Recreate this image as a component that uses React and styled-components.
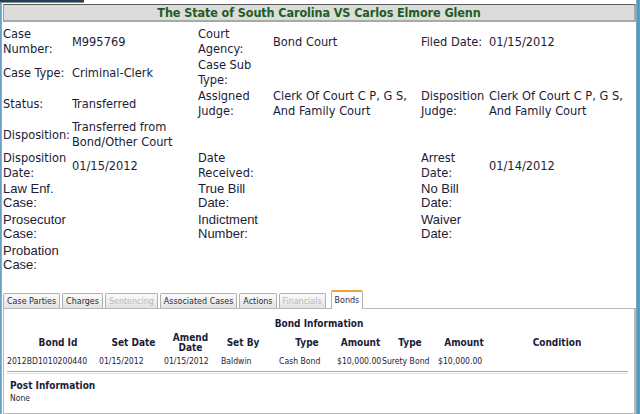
import React from "react";
import styled, { createGlobalStyle } from "styled-components";

const Global = createGlobalStyle`
  html, body {
    margin: 0;
    padding: 0;
    background: #ffffff;
  }
  body {
    font-family: "DejaVu Sans Condensed", "DejaVu Sans", "Liberation Sans", sans-serif;
    color: #1c1c38;
  }
`;

// page frame with the two blue window edges
const Frame = styled.div`
  display: flex;
  width: 640px;
  height: 414px;
  overflow: hidden;
`;

const SideStrip = styled.div`
  flex: 0 0 ${(p) => (p.$right ? 4 : 2)}px;
  background: ${(p) =>
    p.$right
      ? "linear-gradient(90deg, #7fb3cf, #4f8fb2 50%, #6aa3c3)"
      : "linear-gradient(90deg, #5d97b8, #8fbdd5)"};
`;

const Main = styled.div`
  flex: 1;
  display: flex;
  flex-direction: column;
  padding-left: 1px;
  min-width: 0;
`;

const TopNub = styled.div`
  width: 84px;
  height: 2px;
  margin-left: -3px;
  background: #1f3f5f;
  border-bottom: 1px solid #8a8a8a;
`;

const TitleBar = styled.div`
  margin-top: 1px;
  height: 15px;
  border-top: 1px solid #5a5a5a;
  border-left: 1px solid #9a9a9a;
  border-bottom: 2px solid #a8a8a8;
  border-right: 2px solid #a8a8a8;
  background: #dcdcdc;
  color: #1d5e22;
  font-weight: bold;
  font-size: 12.5px;
  line-height: 15px;
  text-align: center;
  letter-spacing: -0.1px;
`;

const Details = styled.div`
  display: grid;
  grid-template-columns: 69px 126px 75px 148px 68px 1fr;
  grid-auto-rows: 31px;
  align-items: center;
  margin-top: 4px;
  font-size: 12.7px;
  line-height: 15px;
`;

const Label = styled.div`
  white-space: nowrap;
  font-family: ${(p) =>
    p.$plain
      ? '"Liberation Sans", Arial, sans-serif'
      : '"DejaVu Sans Condensed", "DejaVu Sans", sans-serif'};
  font-size: ${(p) => (p.$plain ? "13px" : "inherit")};
  line-height: ${(p) => (p.$plain ? "14px" : "15px")};
`;

const Value = styled.div`
  white-space: nowrap;
`;

const TabRow = styled.div`
  display: flex;
  align-items: flex-end;
  gap: 2px;
  margin-top: 16px;
  height: 18px;
  position: relative;
  z-index: 1;
`;

const Tab = styled.div`
  height: ${(p) => (p.$active ? 17 : 14)}px;
  line-height: ${(p) => (p.$active ? 16 : 14)}px;
  padding: 0 3px;
  border: 1px solid #b0b0b0;
  border-bottom: none;
  border-top: ${(p) => (p.$active ? "2px solid #f2a23a" : "1px solid #b0b0b0")};
  border-radius: 2px 2px 0 0;
  background: ${(p) =>
    p.$active ? "#ffffff" : "linear-gradient(#fbfbfb, #e3e3e3)"};
  color: ${(p) => (p.$disabled ? "#b9b9b9" : "#2a2a40")};
  font-size: 8.9px;
  margin-left: ${(p) => (p.$gapBefore ? 3 : 0)}px;
  margin-bottom: ${(p) => (p.$active ? -1 : 0)}px;
  white-space: nowrap;
`;

const Panel = styled.div`
  border: 1px solid #b8b8b8;
  border-right-width: 2px;
  height: 103px;
  padding: 8px 3px 0 3px;
  font-size: 9px;
`;

const SectionTitle = styled.div`
  font-weight: bold;
  font-size: 10px;
  line-height: 13px;
  text-align: ${(p) => (p.$center ? "center" : "left")};
`;

const BondTable = styled.table`
  border-collapse: collapse;
  table-layout: fixed;
  width: 625px;
  margin-top: 3px;

  th {
    padding: 0;
    height: 21px;
  }
  td {
    font-size: 8.6px;
    line-height: 12px;
    padding: 1px 0 0 0;
    white-space: nowrap;
    text-align: left;
  }
`;

// header text centred over its column, nudged by $shift
const HeadCell = styled.div`
  display: flex;
  justify-content: center;
  text-align: center;
  white-space: nowrap;
  font-size: 10px;
  line-height: 10px;
  font-weight: bold;
  padding-left: ${(p) => Math.max(p.$shift, 0) * 2}px;
  padding-right: ${(p) => Math.max(-p.$shift, 0) * 2}px;
`;

const Rule = styled.div`
  margin: 4px 3px 0 0;
  height: 1px;
  border-top: 1px solid #a8a8a8;
  border-bottom: 1px solid #dedede;
`;

const PostBlock = styled.div`
  padding: 5px 0 0 3px;
`;

const Small = styled.div`
  font-size: 8.5px;
  line-height: 12px;
`;

const rows = [
  [
    ["Case\nNumber:", "M995769"],
    ["Court\nAgency:", "Bond Court"],
    ["Filed Date:", "01/15/2012"],
  ],
  [
    ["Case Type:", "Criminal-Clerk"],
    ["Case Sub\nType:", ""],
    ["", ""],
  ],
  [
    ["Status:", "Transferred"],
    ["Assigned\nJudge:", "Clerk Of Court C P, G S,\nAnd Family Court"],
    ["Disposition\nJudge:", "Clerk Of Court C P, G S,\nAnd Family Court"],
  ],
  [
    ["Disposition:", "Transferred from\nBond/Other Court"],
    ["", ""],
    ["", ""],
  ],
  [
    ["Disposition\nDate:", "01/15/2012"],
    ["Date\nReceived:", ""],
    ["Arrest\nDate:", "01/14/2012"],
  ],
  [
    ["Law Enf.\nCase:", "", true],
    ["True Bill\nDate:", "", true],
    ["No Bill\nDate:", "", true],
  ],
  [
    ["Prosecutor\nCase:", "", true],
    ["Indictment\nNumber:", "", true],
    ["Waiver\nDate:", "", true],
  ],
  [
    ["Probation\nCase:", "", true],
    ["", ""],
    ["", ""],
  ],
];

const lines = (text) =>
  text.split("\n").map((t, i) => (
    <React.Fragment key={i}>
      {i > 0 && <br />}
      {t}
    </React.Fragment>
  ));

const tabs = [
  { name: "Case Parties" },
  { name: "Charges" },
  { name: "Sentencing", disabled: true },
  { name: "Associated Cases" },
  { name: "Actions" },
  { name: "Financials", disabled: true },
  { name: "Bonds", active: true, gapBefore: true },
];

const bondCols = [
  { head: "Bond Id", width: 92, shift: 5 },
  { head: "Set Date", width: 65, shift: 2 },
  { head: "Amend\nDate", width: 57, shift: -2 },
  { head: "Set By", width: 58, shift: -7 },
  { head: "Type", width: 58, shift: -1 },
  { head: "Amount", width: 45, shift: 1 },
  { head: "Type", width: 56, shift: 0 },
  { head: "Amount", width: 60, shift: -4 },
  { head: "Condition", width: 134, shift: -8 },
];

const bondRow = [
  "2012BD1010200440",
  "01/15/2012",
  "01/15/2012",
  "Baldwin",
  "Cash Bond",
  "$10,000.00",
  "Surety Bond",
  "$10,000.00",
  "",
];

const App = () => {
  return (
    <>
      <Global />
      <Frame>
        <SideStrip />
        <Main>
          <TopNub />
          <TitleBar>The State of South Carolina VS Carlos Elmore Glenn</TitleBar>
          <Details>
            {rows.map((row, r) =>
              row.map(([label, value, plain], c) => (
                <React.Fragment key={`${r}-${c}`}>
                  <Label $plain={plain}>{lines(label)}</Label>
                  <Value>{lines(value)}</Value>
                </React.Fragment>
              ))
            )}
          </Details>
          <TabRow>
            {tabs.map((t) => (
              <Tab
                key={t.name}
                $active={t.active}
                $disabled={t.disabled}
                $gapBefore={t.gapBefore}
              >
                {t.name}
              </Tab>
            ))}
          </TabRow>
          <Panel>
            <SectionTitle $center>Bond Information</SectionTitle>
            <BondTable>
              <colgroup>
                {bondCols.map((c, i) => (
                  <col key={i} style={{ width: c.width }} />
                ))}
              </colgroup>
              <thead>
                <tr>
                  {bondCols.map((c, i) => (
                    <th key={i}>
                      <HeadCell $shift={c.shift}>
                        <span>{lines(c.head)}</span>
                      </HeadCell>
                    </th>
                  ))}
                </tr>
              </thead>
              <tbody>
                <tr>
                  {bondRow.map((v, i) => (
                    <td key={i}>{v}</td>
                  ))}
                </tr>
              </tbody>
            </BondTable>
            <Rule />
            <PostBlock>
              <SectionTitle>Post Information</SectionTitle>
              <Small>None</Small>
            </PostBlock>
          </Panel>
        </Main>
        <SideStrip $right />
      </Frame>
    </>
  );
};

export default App;
